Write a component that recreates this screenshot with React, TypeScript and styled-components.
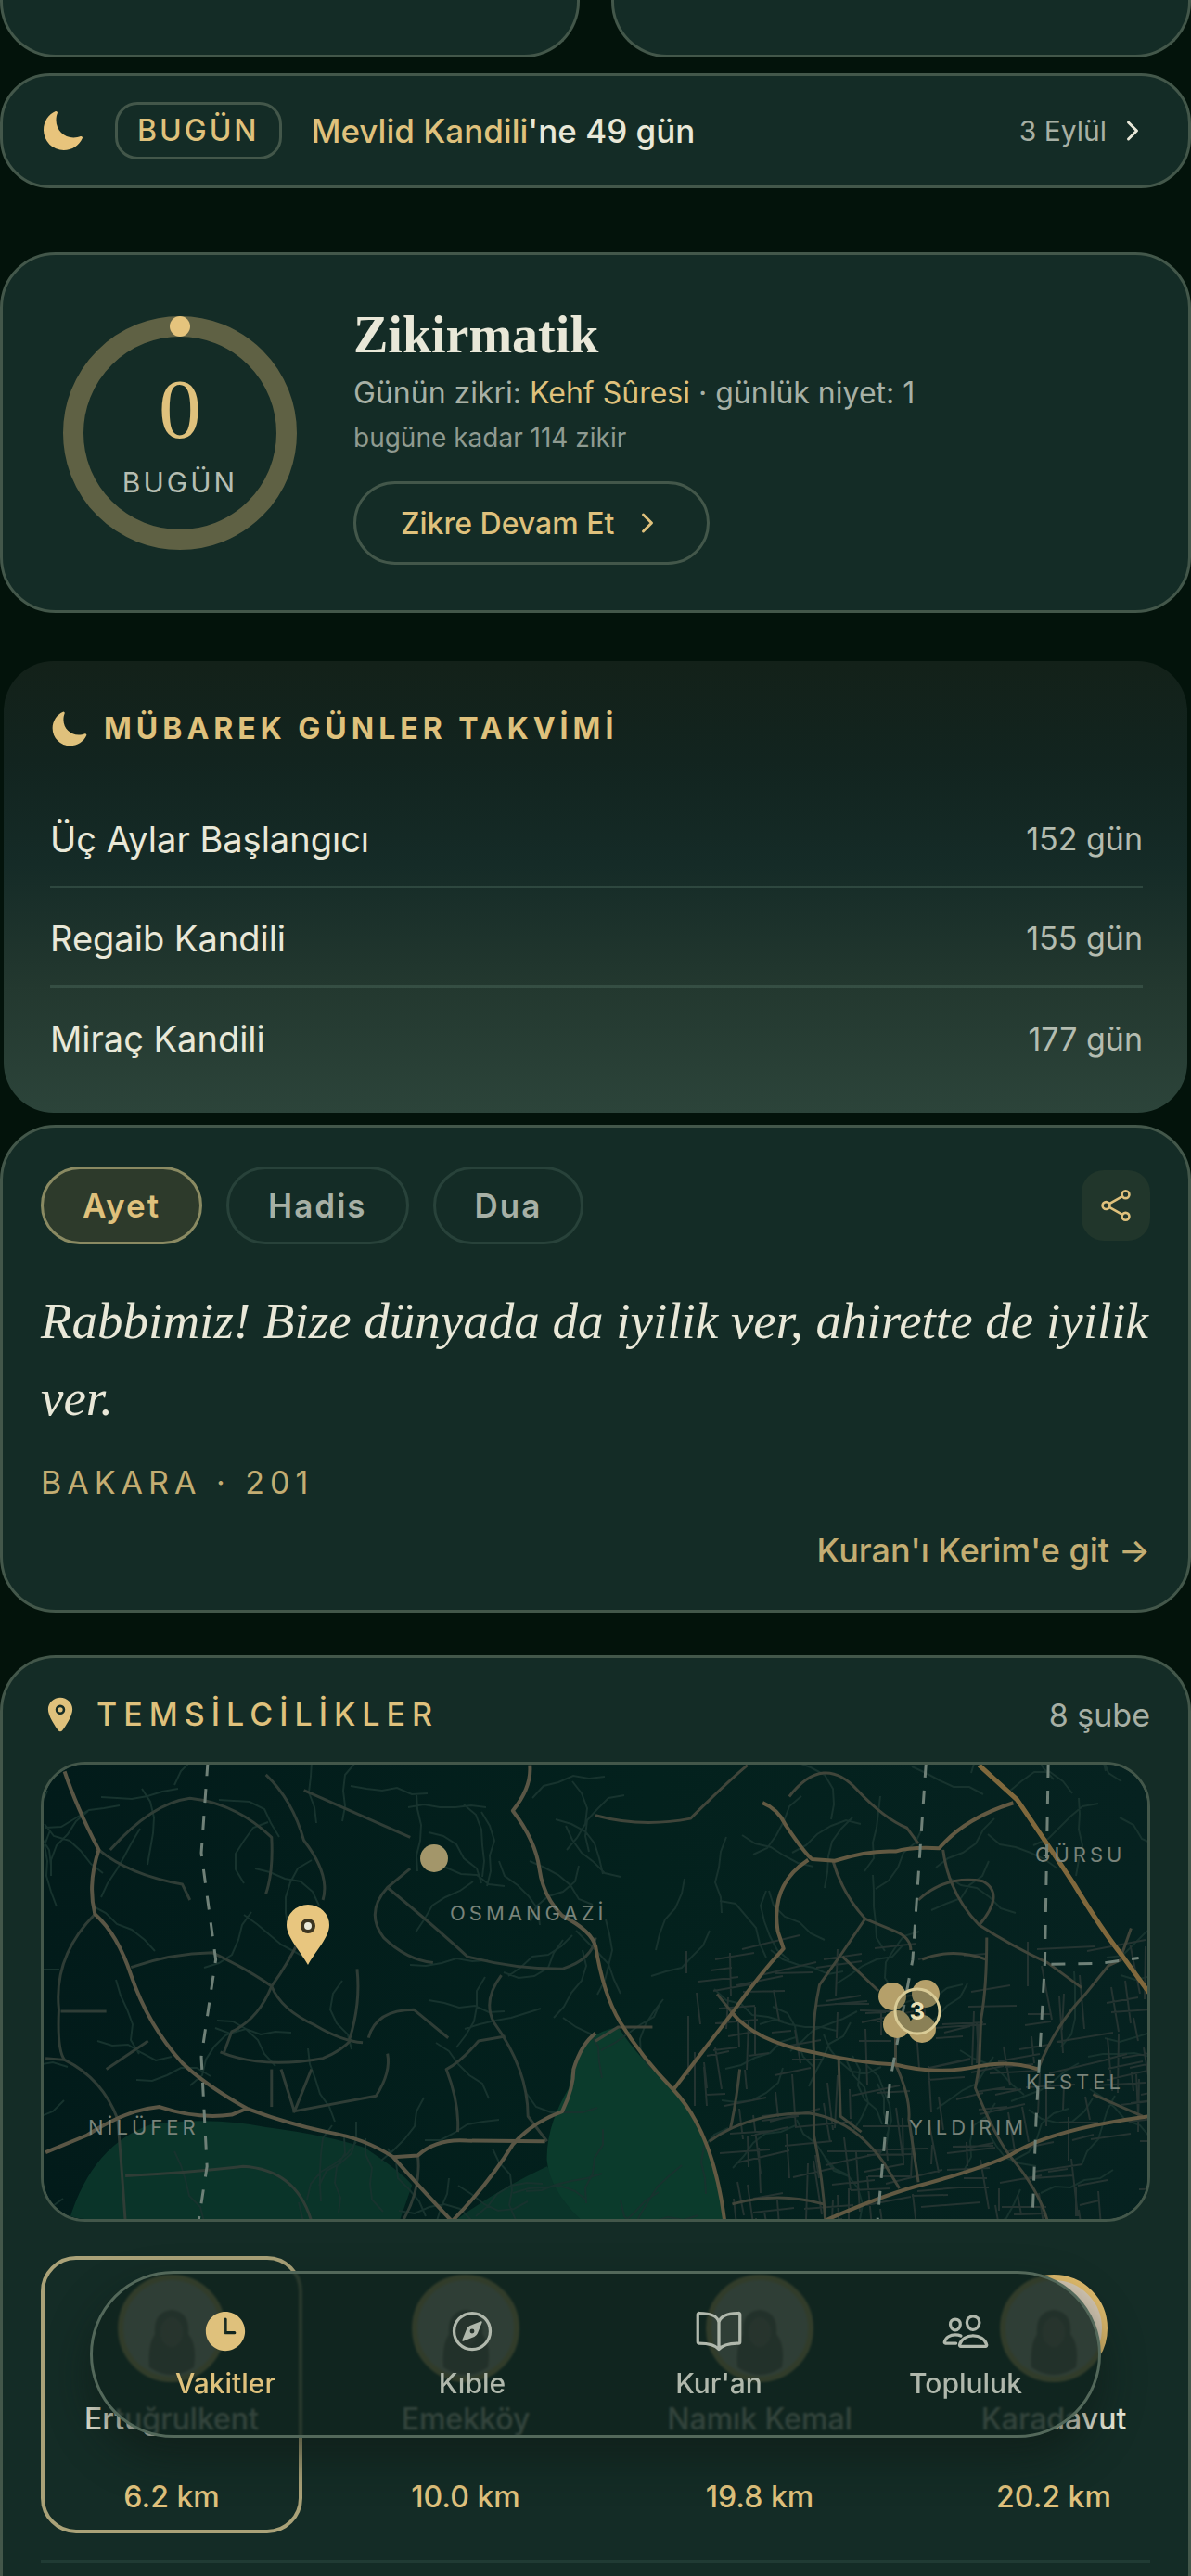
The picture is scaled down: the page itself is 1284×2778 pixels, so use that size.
import React from "react";
import styled, { createGlobalStyle, css } from "styled-components";
import {
  IoBookOutline,
  IoChevronForward,
  IoCompassOutline,
  IoLocation,
  IoMoon,
  IoPeopleOutline,
  IoShareSocialOutline,
  IoTime,
} from "react-icons/io5";

const color = {
  page: "#03130b",
  card: "#142c26",
  line: "#43574a",
  faint: "#28423a",
  gold: "#dfc17c",
  goldSoft: "#c3ad72",
  cream: "#e9e8d8",
  muted: "#a7b0a5",
};

const Global = createGlobalStyle`
  *, *::before, *::after { box-sizing: border-box; }
  body { margin: 0; background: ${color.page}; }
  h2, p, ul { margin: 0; padding: 0; }
  button { font: inherit; cursor: pointer; }
  a { color: inherit; text-decoration: none; }
`;

const Page = styled.main`
  display: flex;
  flex-direction: column;
  min-height: 100vh;
  overflow: hidden;
  background: ${color.page};
  color: ${color.cream};
  font-family: Inter, "Noto Sans", sans-serif;
`;

const surface = css`
  background: ${color.card};
  border: 3px solid ${color.line};
`;

const TopRow = styled.div`
  display: grid;
  grid-template-columns: 1fr 1fr;
  gap: 34px;
`;

const TopCard = styled.div`
  ${surface}
  border-top: 0;
  border-radius: 0 0 60px 60px;
  padding-top: 59px;
`;

const Card = styled.section`
  ${surface}
  border-radius: 60px;
`;

const TodayCard = styled(Card)`
  display: flex;
  align-items: center;
  margin-top: 17px;
  padding: 28px 44px 28px 41px;
  border-radius: 54px;
`;

const TodayBadge = styled.span`
  margin: 0 32px 0 32px;
  padding: 0 21px;
  border: 3px solid ${color.line};
  border-radius: 24px;
  color: ${color.gold};
  font-size: 32px;
  font-weight: 500;
  line-height: 56px;
  letter-spacing: 3px;
`;

const TodayText = styled.p`
  flex: 1;
  font-size: 35px;
  font-weight: 500;
  line-height: 48px;
`;

const Gold = styled.span`
  color: ${color.gold};
`;

const TodayLink = styled.a`
  display: flex;
  align-items: center;
  gap: 12px;
  color: ${color.muted};
  font-size: 30px;
  line-height: 48px;
  svg { color: ${color.cream}; }
`;

const DhikrCard = styled(Card)`
  display: flex;
  align-items: center;
  gap: 61px;
  margin-top: 69px;
  padding: 49px 65px;
`;

const Counter = styled.div`
  display: grid;
  flex: none;
  width: 252px;
  height: 252px;
  > * { grid-area: 1 / 1; }
`;

const CounterText = styled.div`
  display: flex;
  flex-direction: column;
  align-items: center;
  justify-content: center;
  padding-top: 8px;
`;

const Count = styled.span`
  color: ${color.gold};
  font-family: "Liberation Serif", serif;
  font-size: 92px;
  line-height: 98px;
`;

const CountLabel = styled.span`
  color: #b6beb2;
  font-size: 30px;
  line-height: 60px;
  letter-spacing: 3px;
`;

const DhikrTitle = styled.h2`
  font-family: "Liberation Serif", serif;
  font-size: 56px;
  font-weight: 700;
  line-height: 74px;
`;

const DhikrLine = styled.p`
  color: ${color.muted};
  font-size: 32px;
  line-height: 52px;
`;

const DhikrTotal = styled.p`
  color: #8f9b91;
  font-size: 28px;
  line-height: 44px;
`;

const ContinueButton = styled.button`
  display: flex;
  align-items: center;
  gap: 20px;
  height: 90px;
  margin-top: 25px;
  padding: 0 48px;
  border: 3px solid ${color.line};
  border-radius: 45px;
  background: transparent;
  color: ${color.gold};
  font-size: 32px;
  font-weight: 500;
`;

const HolyDays = styled.section`
  margin: 52px 4px 0;
  padding: 49px 48px 28px 50px;
  border-radius: 54px;
  background: linear-gradient(#132119, #12241f 22%, #152b27 45%, #23382f 72%, #2c443a);
`;

const HolyTitle = styled.h2`
  display: flex;
  align-items: center;
  gap: 16px;
  margin-bottom: 41px;
  color: ${color.gold};
  font-size: 32px;
  font-weight: 700;
  line-height: 48px;
  letter-spacing: 5px;
`;

const DayList = styled.ul`
  list-style: none;
`;

const DayRow = styled.li`
  display: flex;
  align-items: center;
  justify-content: space-between;
  height: 107px;
  padding-top: 3px;
  font-size: 38px;
  font-weight: 400;
  &:not(:last-child) { border-bottom: 3px solid rgba(90, 120, 105, 0.35); }
`;

const DaysLeft = styled.span`
  color: #b4bcb0;
  font-size: 34px;
`;

const VerseCard = styled(Card)`
  display: flex;
  flex-direction: column;
  margin-top: 13px;
  padding: 42px 41px;
`;

const Tabs = styled.div`
  display: flex;
  align-items: center;
  gap: 26px;
`;

const Tab = styled.button<{ $active?: boolean }>`
  height: 84px;
  padding: 0 42px;
  border: 3px solid ${(p) => (p.$active ? "#8a8a62" : color.faint)};
  border-radius: 42px;
  background: ${(p) => (p.$active ? "#2d3a2b" : "transparent")};
  color: ${(p) => (p.$active ? color.gold : color.muted)};
  font-size: 35px;
  font-weight: 600;
  letter-spacing: 2px;
`;

const ShareButton = styled.button`
  display: grid;
  place-items: center;
  width: 74px;
  height: 76px;
  margin-left: auto;
  padding: 0;
  border: 0;
  border-radius: 24px;
  background: #21362b;
  color: ${color.gold};
`;

const Verse = styled.p`
  margin: 41px 0 28px;
  font-family: "Liberation Serif", serif;
  font-size: 55px;
  font-style: italic;
  line-height: 83px;
`;

const Source = styled.p`
  color: ${color.goldSoft};
  font-size: 34px;
  line-height: 44px;
  letter-spacing: 6px;
`;

const VerseLink = styled.a`
  align-self: flex-end;
  margin-top: 29px;
  color: ${color.goldSoft};
  font-size: 36px;
  font-weight: 500;
  line-height: 44px;
`;

const BranchCard = styled(Card)`
  flex: 1;
  margin-top: 46px;
  padding: 37px 41px 13px;
  border-bottom: 0;
  border-radius: 60px 60px 0 0;
`;

const BranchHeader = styled.header`
  display: flex;
  align-items: center;
  justify-content: space-between;
  margin-bottom: 27px;
`;

const BranchTitle = styled.h2`
  display: flex;
  align-items: center;
  gap: 18px;
  color: ${color.gold};
  font-size: 34px;
  font-weight: 500;
  line-height: 48px;
  letter-spacing: 7px;
`;

const BranchCount = styled.span`
  color: ${color.muted};
  font-size: 34px;
`;

const MapFrame = styled.div`
  height: 496px;
  overflow: hidden;
  border: 3px solid ${color.line};
  border-radius: 48px;
  background: #021c1c;
  svg { display: block; width: 100%; height: 100%; }
  path { vector-effect: non-scaling-stroke; }
`;

const MapLabel = styled.text`
  fill: #79837a;
  font-size: 22px;
  letter-spacing: 4px;
`;

const Branches = styled.ul`
  display: flex;
  gap: 35px;
  margin-top: 37px;
  padding-bottom: 29px;
  overflow: hidden;
  border-bottom: 3px solid #203b34;
  list-style: none;
`;

const Branch = styled.li<{ $active?: boolean }>`
  display: flex;
  flex: none;
  flex-direction: column;
  align-items: center;
  width: 282px;
  padding: 16px 0 15px;
  border: 4px solid ${(p) => (p.$active ? "#aaa278" : "transparent")};
  border-radius: 38px;
`;

const Avatar = styled.svg`
  width: 116px;
  height: 116px;
  margin-bottom: 20px;
`;

const BranchName = styled.span`
  font-size: 32px;
  font-weight: 500;
  line-height: 40px;
`;

const Distance = styled.span`
  margin-top: 44px;
  color: ${color.gold};
  font-size: 32px;
  font-weight: 500;
  line-height: 40px;
`;

const NavBar = styled.nav`
  position: fixed;
  right: 97px;
  bottom: 149px;
  left: 97px;
  display: grid;
  grid-template-columns: repeat(4, 1fr);
  height: 180px;
  padding: 0 10px;
  border: 3px solid #53685a;
  border-radius: 90px;
  background: rgba(16, 36, 30, 0.84);
  backdrop-filter: blur(1px);
  box-shadow: 0 22px 44px rgba(12, 24, 18, 0.55);
`;

const NavItem = styled.a<{ $active?: boolean }>`
  display: flex;
  flex-direction: column;
  align-items: center;
  justify-content: center;
  gap: 10px;
  color: ${(p) => (p.$active ? color.gold : "#b0b8ac")};
  font-size: 30px;
  font-weight: 500;
  line-height: 40px;
`;

const days = [
  { name: "Üç Aylar Başlangıcı", left: "152 gün" },
  { name: "Regaib Kandili", left: "155 gün" },
  { name: "Miraç Kandili", left: "177 gün" },
];

const branches = [
  { name: "Ertuğrulkent", distance: "6.2 km" },
  { name: "Emekköy", distance: "10.0 km" },
  { name: "Namık Kemal", distance: "19.8 km" },
  { name: "Karadavut", distance: "20.2 km" },
];

const nav = [
  { label: "Vakitler", Icon: IoTime },
  { label: "Kıble", Icon: IoCompassOutline },
  { label: "Kur'an", Icon: IoBookOutline },
  { label: "Topluluk", Icon: IoPeopleOutline },
];

// Small deterministic generator so that side streets are the same on each render.
function random(seed: number) {
  let s = seed;
  return () => {
    s = (s * 16807) % 2147483647;
    return s / 2147483647;
  };
}

// Winding rural lanes over the whole map.
function lanes() {
  const r = random(77);
  let d = "";
  for (let i = 0; i < 150; i++) {
    let x = r() * 1196;
    let y = r() * 496;
    let a = r() * 6.28;
    d += `M${x.toFixed(0)} ${y.toFixed(0)}`;
    for (let k = 0; k < 5; k++) {
      a += (r() - 0.5) * 1.3;
      x += Math.cos(a) * 17;
      y += Math.sin(a) * 17;
      d += `L${x.toFixed(0)} ${y.toFixed(0)}`;
    }
  }
  return d;
}

// Denser, near-orthogonal blocks in the eastern districts.
function blocks() {
  const r = random(41);
  let d = "";
  for (let i = 0; i < 230; i++) {
    const t = r();
    let y = 190 + r() * 306;
    let x = 640 + y * 0.2 + t * (556 - y * 0.2);
    const a = (r() > 0.5 ? 1.5 : -0.12) + (r() - 0.5) * 0.25;
    const n = 20 + r() * 45;
    d += `M${x.toFixed(0)} ${y.toFixed(0)}`;
    x += Math.cos(a) * n;
    y += Math.sin(a) * n;
    d += `L${x.toFixed(0)} ${y.toFixed(0)}`;
  }
  return d;
}

const westMain = [
  "M170 90Q200 200 260 340Q230 450 250 545Q310 610 345 740Q390 900 480 1020Q540 1090 650 1165Q760 1215 860 1240Q960 1260 1035 1320Q1100 1410 1190 1525",
  "M120 1305L230 1250Q330 1170 420 1160Q520 1200 610 1185L650 1165",
  "M1035 1320L1100 1315Q1150 1260 1230 1268L1435 1270",
  "M1190 1525Q1290 1400 1350 1280Q1400 1210 1480 1175Q1510 1100 1510 1040Q1530 960 1568 925",
  "M1395 70Q1400 140 1350 215Q1410 310 1420 400Q1430 490 1480 550Q1560 600 1568 650",
];

const westMinor = [
  "M250 545Q140 680 155 850Q150 980 170 1010Q270 1070 310 1200Q320 1350 330 1525",
  "M120 1005L170 1010",
  "M1100 1315Q1110 1420 1060 1525",
  "M345 715Q450 670 560 668Q650 720 715 775Q740 850 830 900Q900 950 955 955",
  "M580 985Q690 1040 850 1005Q900 980 925 945",
  "M715 775Q760 700 790 620",
  "M715 775Q680 880 610 920L590 985",
  "M700 100Q770 180 800 310Q870 420 850 500",
  "M290 340Q400 190 500 175Q620 190 715 300Q720 410 700 480",
  "M260 340Q340 420 480 450L500 500",
  "M1080 400L1020 460Q960 540 1010 620Q1070 690 1140 700",
  "M1020 460Q1150 590 1230 680Q1350 720 1480 720Q1560 690 1568 620",
  "M1320 740Q1270 820 1300 890Q1390 1040 1390 1190L1440 1270",
  "M1330 935L1260 950Q1210 1020 1175 1040Q1210 1150 1205 1240",
  "M940 720Q950 830 920 945",
  "M970 940Q990 850 1090 850L1180 940",
  "M770 1175L990 1125Q1030 1050 1020 990",
  "M715 1040L715 1160",
  "M740 1040L775 1175L820 1040",
  "M800 150L1080 300",
  "M280 1040L390 950",
  "M160 855L280 855",
  "M330 1380Q500 1370 640 1350Q780 1360 820 1525",
];

const eastMain = [
  "M0 645Q20 800 65 890Q120 1000 205 1105Q310 1240 340 1525",
  "M1010 70L1110 180Q1200 340 1260 450Q1330 590 1385 675L1460 800",
  "M440 190Q480 210 500 260Q550 350 570 370L630 375Q720 340 790 345Q830 330 905 335Q970 240 1100 190",
  "M560 372Q460 450 480 600L495 655Q430 740 360 860Q420 950 570 985Q690 1020 790 1025Q900 1060 1010 1030Q1090 1010 1165 1040",
  "M360 860Q290 970 205 1105",
  "M600 1525Q740 1450 840 1415Q1010 1360 1090 1315Q1200 1230 1460 1190",
];

const eastMinor = [
  "M625 375Q650 480 710 560Q650 670 590 770Q570 880 575 985L575 1250Q600 1400 605 1525",
  "M710 560L790 600Q830 620 830 660",
  "M650 680L745 790",
  "M915 340Q930 480 1010 580Q1100 650 1190 700L1280 780",
  "M1165 1040Q1210 900 1290 800L1350 710L1385 690",
  "M790 930L790 1025Q830 1130 825 1200L850 1400",
  "M1090 1315Q1170 1430 1190 1525",
  "M1030 620Q1030 780 1015 880L1010 1030L1000 1100Q1050 1250 1090 1315",
  "M300 1270Q400 1180 560 1180Q680 1200 760 1340L800 1420",
  "M380 1040Q370 1150 355 1230",
  "M640 1000L645 1190L700 1240",
  "M510 170Q600 30 690 150Q760 240 820 270L850 320",
  "M0 230Q120 270 250 240Q350 120 400 70",
  "M850 500Q920 420 1020 440Q1080 480 1010 580",
  "M860 690Q940 650 1030 690",
  "M320 800L360 860",
  "M1310 1120L1440 1190",
  "M1385 675L1410 590",
  "M0 950L60 905L150 905",
  "M360 1470Q480 1430 600 1470",
];

function BranchMap() {
  const west = "translate(-47 -23) scale(.4095 .338)";
  const east = "translate(595 -23) scale(.4095 .338)";
  return (
    <MapFrame>
      <svg viewBox="0 0 1190 490" preserveAspectRatio="xMidYMid slice" role="img" aria-label="Temsilcilik haritası" fill="none">
        <defs>
          <linearGradient id="land" x1="0" x2="1">
            <stop offset="0" stopColor="#021b1a" />
            <stop offset="0.55" stopColor="#03211d" />
            <stop offset="1" stopColor="#062220" />
          </linearGradient>
        </defs>
        <rect width="1190" height="490" fill="url(#land)" />
        <g fill="#0a3429">
          <path transform={west} d="M180 1530Q240 1280 400 1215Q560 1190 700 1225Q860 1250 960 1290Q1060 1370 1085 1410L1050 1530Z" />
          <path transform={west} d="M1190 1530Q1300 1430 1440 1350L1560 1530Z" />
          <path transform={east} fill="#0b3b2c" d="M60 905Q-60 930 -70 1100Q-130 1220 -128 1330Q-120 1430 -30 1530L340 1530Q320 1260 205 1105Q110 1000 60 905Z" />
        </g>
        <path d={lanes()} stroke="#17332e" strokeWidth="2" />
        <path d={blocks()} stroke="#243431" strokeWidth="2" />
        <g strokeLinejoin="round">
          <g transform={west}>
            {westMinor.map((d) => <path key={d} d={d} stroke="#2f3d36" strokeWidth="3" />)}
            {westMain.map((d) => <path key={d} d={d} stroke="#5a5645" strokeWidth="4" />)}
          </g>
          <g transform={east}>
            {eastMinor.map((d) => <path key={d} d={d} stroke="#40453a" strokeWidth="3" />)}
            {eastMain.map((d) => <path key={d} d={d} stroke="#625942" strokeWidth="4" />)}
            <path d={eastMain[1]} stroke="#80683c" strokeWidth="5" />
          </g>
          <g stroke="#6f8178" strokeWidth="3" strokeDasharray="15 14">
            <path transform={west} d="M547 60L530 350L568 690L530 1000L545 1350L522 1530" />
            <path transform={east} d="M870 65L835 690L775 1080L742 1530" />
            <path transform={east} d="M1192 65L1183 700L1160 1200L1150 1530" />
            <path transform={east} d="M1200 705L1330 702L1430 685" />
          </g>
        </g>
        <MapLabel x="438" y="168">OSMANGAZİ</MapLabel>
        <MapLabel x="1069" y="105">GÜRSU</MapLabel>
        <MapLabel x="1059" y="350">KESTEL</MapLabel>
        <MapLabel x="933" y="399">YILDIRIM</MapLabel>
        <MapLabel x="48" y="399">NİLÜFER</MapLabel>
        <circle cx="421" cy="101" r="15" fill="#a3966a" />
        <path
          d="M285 216C276 200 262 186 262 173A23 22 0 0 1 308 173C308 186 294 200 285 216Z"
          fill="#e8c67f"
        />
        <circle cx="285" cy="174" r="6" fill="#e9e8d8" stroke="#3c3520" strokeWidth="4" />
        <g fill="#b5a06a">
          <circle cx="915" cy="250" r="15" />
          <circle cx="951" cy="247" r="15" />
          <circle cx="920" cy="280" r="15" />
          <circle cx="947" cy="285" r="15" />
        </g>
        <circle cx="942" cy="266" r="24" fill="rgba(10,30,26,.25)" stroke="#d9cb96" strokeWidth="3" />
        <text x="942" y="275" textAnchor="middle" fontSize="26" fontWeight="700" fill="#e9dfb4">3</text>
      </svg>
    </MapFrame>
  );
}

function Portrait() {
  return (
    <Avatar viewBox="0 0 116 116" aria-hidden="true">
      <circle cx="58" cy="58" r="55" fill="#d3c6b2" stroke="#dfba6c" strokeWidth="6" />
      <path d="M34 100Q32 76 40 64Q38 40 58 38Q78 40 76 64Q86 76 82 100Q58 116 34 100Z" fill="#86756a" />
      <ellipse cx="58" cy="62" rx="12" ry="16" fill="#a08c7e" />
    </Avatar>
  );
}

export default function App() {
  return (
    <>
      <Global />
      <Page>
        <TopRow>
          <TopCard />
          <TopCard />
        </TopRow>

        <TodayCard>
          <IoMoon size={48} color="#e8c47c" />
          <TodayBadge>BUGÜN</TodayBadge>
          <TodayText>
            <Gold>Mevlid Kandili</Gold>'ne 49 gün
          </TodayText>
          <TodayLink href="#takvim">
            3 Eylül <IoChevronForward size={32} />
          </TodayLink>
        </TodayCard>

        <DhikrCard>
          <Counter>
            <svg viewBox="0 0 252 252" aria-hidden="true">
              <circle cx="126" cy="126" r="115" fill="none" stroke="#5f6144" strokeWidth="22" />
              <circle cx="126" cy="11" r="11" fill="#e5c47d" />
            </svg>
            <CounterText>
              <Count>0</Count>
              <CountLabel>BUGÜN</CountLabel>
            </CounterText>
          </Counter>
          <div>
            <DhikrTitle>Zikirmatik</DhikrTitle>
            <DhikrLine>
              Günün zikri: <Gold>Kehf Sûresi</Gold> · günlük niyet: 1
            </DhikrLine>
            <DhikrTotal>bugüne kadar 114 zikir</DhikrTotal>
            <ContinueButton type="button">
              Zikre Devam Et <IoChevronForward size={32} />
            </ContinueButton>
          </div>
        </DhikrCard>

        <HolyDays id="takvim">
          <HolyTitle>
            <IoMoon size={42} /> MÜBAREK GÜNLER TAKVİMİ
          </HolyTitle>
          <DayList>
            {days.map((day) => (
              <DayRow key={day.name}>
                {day.name}
                <DaysLeft>{day.left}</DaysLeft>
              </DayRow>
            ))}
          </DayList>
        </HolyDays>

        <VerseCard>
          <Tabs>
            <Tab type="button" $active>Ayet</Tab>
            <Tab type="button">Hadis</Tab>
            <Tab type="button">Dua</Tab>
            <ShareButton type="button" aria-label="Paylaş">
              <IoShareSocialOutline size={42} />
            </ShareButton>
          </Tabs>
          <Verse>Rabbimiz! Bize dünyada da iyilik ver, ahirette de iyilik ver.</Verse>
          <Source>BAKARA · 201</Source>
          <VerseLink href="#kuran">Kuran'ı Kerim'e git →</VerseLink>
        </VerseCard>

        <BranchCard>
          <BranchHeader>
            <BranchTitle>
              <IoLocation size={42} /> TEMSİLCİLİKLER
            </BranchTitle>
            <BranchCount>8 şube</BranchCount>
          </BranchHeader>
          <BranchMap />
          <Branches>
            {branches.map((branch, i) => (
              <Branch key={branch.name} $active={i === 0}>
                <Portrait />
                <BranchName>{branch.name}</BranchName>
                <Distance>{branch.distance}</Distance>
              </Branch>
            ))}
          </Branches>
        </BranchCard>

        <NavBar>
          {nav.map(({ label, Icon }, i) => (
            <NavItem key={label} href={`#${label}`} $active={i === 0}>
              <Icon size={52} />
              {label}
            </NavItem>
          ))}
        </NavBar>
      </Page>
    </>
  );
}
